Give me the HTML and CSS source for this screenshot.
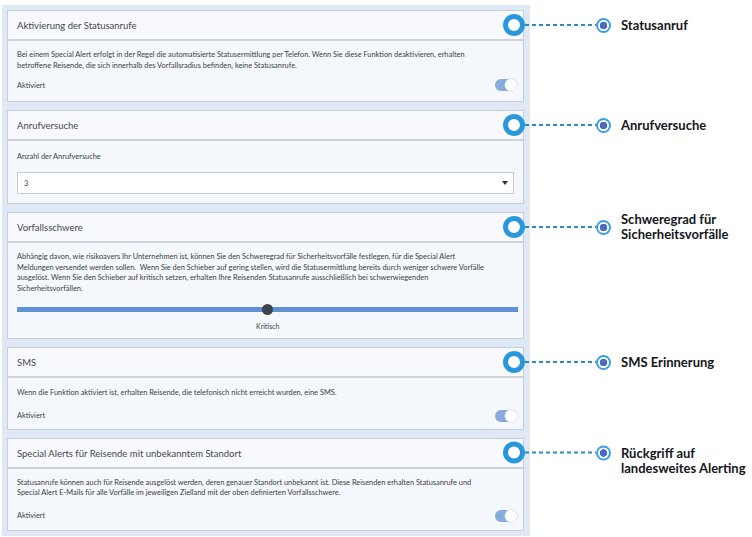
FILE: index.html
```html
<!DOCTYPE html>
<html lang="de">
<head>
<meta charset="utf-8">
<title>Special Alert Einstellungen</title>
<link rel="stylesheet" href="styles.css">
</head>
<body>
<div class="panel">
  <section class="card">
    <div class="card-head">
      <span class="title">Aktivierung der Statusanrufe</span>
      <div class="annot">
        <span class="ring"></span><span class="dash"></span><span class="target"></span>
        <span class="label">Statusanruf</span>
      </div>
    </div>
    <div class="card-body">
      <p class="text">Bei einem Special Alert erfolgt in der Regel die automatisierte Statusermittlung per Telefon. Wenn Sie diese Funktion deaktivieren, erhalten<br>betroffene Reisende, die sich innerhalb des Vorfallsradius befinden, keine Statusanrufe.</p>
      <div class="toggle-row"><span class="small">Aktiviert</span><span class="toggle"></span></div>
    </div>
  </section>

  <section class="card">
    <div class="card-head">
      <span class="title">Anrufversuche</span>
      <div class="annot">
        <span class="ring"></span><span class="dash"></span><span class="target"></span>
        <span class="label">Anrufversuche</span>
      </div>
    </div>
    <div class="card-body body-select">
      <p class="small">Anzahl der Anrufversuche</p>
      <div class="select"><span class="small">3</span><span class="caret"></span></div>
    </div>
  </section>

  <section class="card">
    <div class="card-head">
      <span class="title">Vorfallsschwere</span>
      <div class="annot">
        <span class="ring"></span><span class="dash"></span><span class="target"></span>
        <span class="label">Schweregrad für<br>Sicherheitsvorfälle</span>
      </div>
    </div>
    <div class="card-body body-slider">
      <p class="text">Abhängig davon, wie risikoavers Ihr Unternehmen ist, können Sie den Schweregrad für Sicherheitsvorfälle festlegen, für die Special Alert<br>Meldungen versendet werden sollen.&nbsp; Wenn Sie den Schieber auf gering stellen, wird die Statusermittlung bereits durch weniger schwere Vorfälle<br>ausgelöst. Wenn Sie den Schieber auf kritisch setzen, erhalten Ihre Reisenden Statusanrufe ausschließlich bei schwerwiegenden<br>Sicherheitsvorfällen.</p>
      <div class="slider"><span class="thumb"></span></div>
      <p class="slider-label small">Kritisch</p>
    </div>
  </section>

  <section class="card">
    <div class="card-head">
      <span class="title">SMS</span>
      <div class="annot">
        <span class="ring"></span><span class="dash"></span><span class="target"></span>
        <span class="label">SMS Erinnerung</span>
      </div>
    </div>
    <div class="card-body body-sms">
      <p class="text">Wenn die Funktion aktiviert ist, erhalten Reisende, die telefonisch nicht erreicht wurden, eine SMS.</p>
      <div class="toggle-row"><span class="small">Aktiviert</span><span class="toggle"></span></div>
    </div>
  </section>

  <section class="card">
    <div class="card-head">
      <span class="title">Special Alerts für Reisende mit unbekanntem Standort</span>
      <div class="annot">
        <span class="ring"></span><span class="dash"></span><span class="target"></span>
        <span class="label label-top">Rückgriff auf<br>landesweites Alerting</span>
      </div>
    </div>
    <div class="card-body body-last">
      <p class="text">Statusanrufe können auch für Reisende ausgelöst werden, deren genauer Standort unbekannt ist. Diese Reisenden erhalten Statusanrufe und<br>Special Alert E-Mails für alle Vorfälle im jeweiligen Zielland mit der oben definierten Vorfallsschwere.</p>
      <div class="toggle-row"><span class="small">Aktiviert</span><span class="toggle"></span></div>
    </div>
  </section>
</div>
</body>
</html>
```

FILE: styles.css
```css
* { box-sizing: border-box; }

html, body {
  margin: 0;
  padding: 0;
  background: #ffffff;
}

body {
  width: 752px;
  height: 537px;
  overflow: hidden;
  font-family: Lato, "Open Sans", sans-serif;
  color: #3c3f44;
}

p { margin: 0; }

.panel {
  margin: 5px 0 0 2px;
  width: 528px;
  padding: 5px 6px 5px 5px;
  background: #dfe9f6;
  display: flex;
  flex-direction: column;
  gap: 8px;
}

.card {
  border: 1px solid #c3cedb;
  background: #f4f7fb;
}

.card-head {
  position: relative;
  height: 30px;
  padding: 0 9px;
  display: flex;
  align-items: center;
  background: #f7f9fc;
  border-bottom: 2px solid #cdd2d9;
}

.title {
  font-size: 9.5px;
  color: #45484d;
  padding-top: 1px;
}

.card-body {
  padding: 9px 9px 10px;
}

.text {
  font-size: 7.4px;
  line-height: 10.5px;
  color: #3c3f44;
}

.small {
  font-size: 7.4px;
  line-height: 11px;
  color: #3c3f44;
}

.toggle-row {
  margin-top: 8px;
  display: flex;
  align-items: center;
  justify-content: space-between;
  height: 12px;
}

.toggle {
  position: relative;
  width: 22px;
  height: 12px;
  border-radius: 6px;
  background: #85acda;
  margin-right: -3px;
}

.toggle::after {
  content: "";
  position: absolute;
  right: 0;
  top: 0;
  width: 12px;
  height: 12px;
  border-radius: 50%;
  background: #ffffff;
  box-shadow: 0 0 0 0.5px #c6d2e0;
}

/* select */
.body-select {
  padding: 10px 9px 9px;
}

.select {
  margin-top: 10px;
  height: 22px;
  background: #ffffff;
  border: 1px solid #c9ccd1;
  display: flex;
  align-items: center;
  justify-content: space-between;
  padding: 0 5px 0 6px;
}

.caret {
  width: 0;
  height: 0;
  border-left: 3.5px solid transparent;
  border-right: 3.5px solid transparent;
  border-top: 4px solid #2c2f33;
}

/* slider */
.body-slider {
  padding: 9px 5px 6px 9px;
}

.slider {
  position: relative;
  margin-top: 10px;
  height: 11px;
  display: flex;
  align-items: center;
}

.slider::before {
  content: "";
  flex: 1;
  height: 5px;
  background: #5f91d3;
}

.thumb {
  position: absolute;
  left: 245px;
  top: 0;
  width: 11px;
  height: 11px;
  border-radius: 50%;
  background: #3e4350;
}

.slider-label {
  margin-top: 6px;
  padding-left: 239px;
  font-size: 7px;
}

.body-sms {
  padding: 10px 9px 7px;
}

.body-sms .toggle-row {
  margin-top: 11px;
}

.body-last {
  padding: 9px 9px 8px;
}

.body-last .toggle-row {
  margin-top: 11px;
}

/* annotations */
.annot {
  position: absolute;
  left: calc(100% - 20px);
  top: 50%;
  transform: translateY(-50%);
  display: flex;
  align-items: center;
  white-space: nowrap;
}

.ring {
  width: 22px;
  height: 22px;
  border-radius: 50%;
  border: 5px solid #2a97dd;
  background: #ffffff;
  flex: none;
}

.dash {
  width: 71px;
  height: 2px;
  background: repeating-linear-gradient(90deg, #2b8cc2 0 4px, transparent 4px 7px);
  flex: none;
}

.target {
  width: 15px;
  height: 15px;
  border-radius: 50%;
  border: 2px solid #3da0e2;
  background: radial-gradient(circle, #4b69c6 0 3.5px, #ffffff 4px);
  flex: none;
}

.label {
  margin-left: 10px;
  font-family: Lato, "Open Sans", sans-serif;
  font-weight: 700;
  font-size: 13px;
  line-height: 15px;
  color: #14161a;
}

.label-top {
  margin-top: 15px;
}
```
